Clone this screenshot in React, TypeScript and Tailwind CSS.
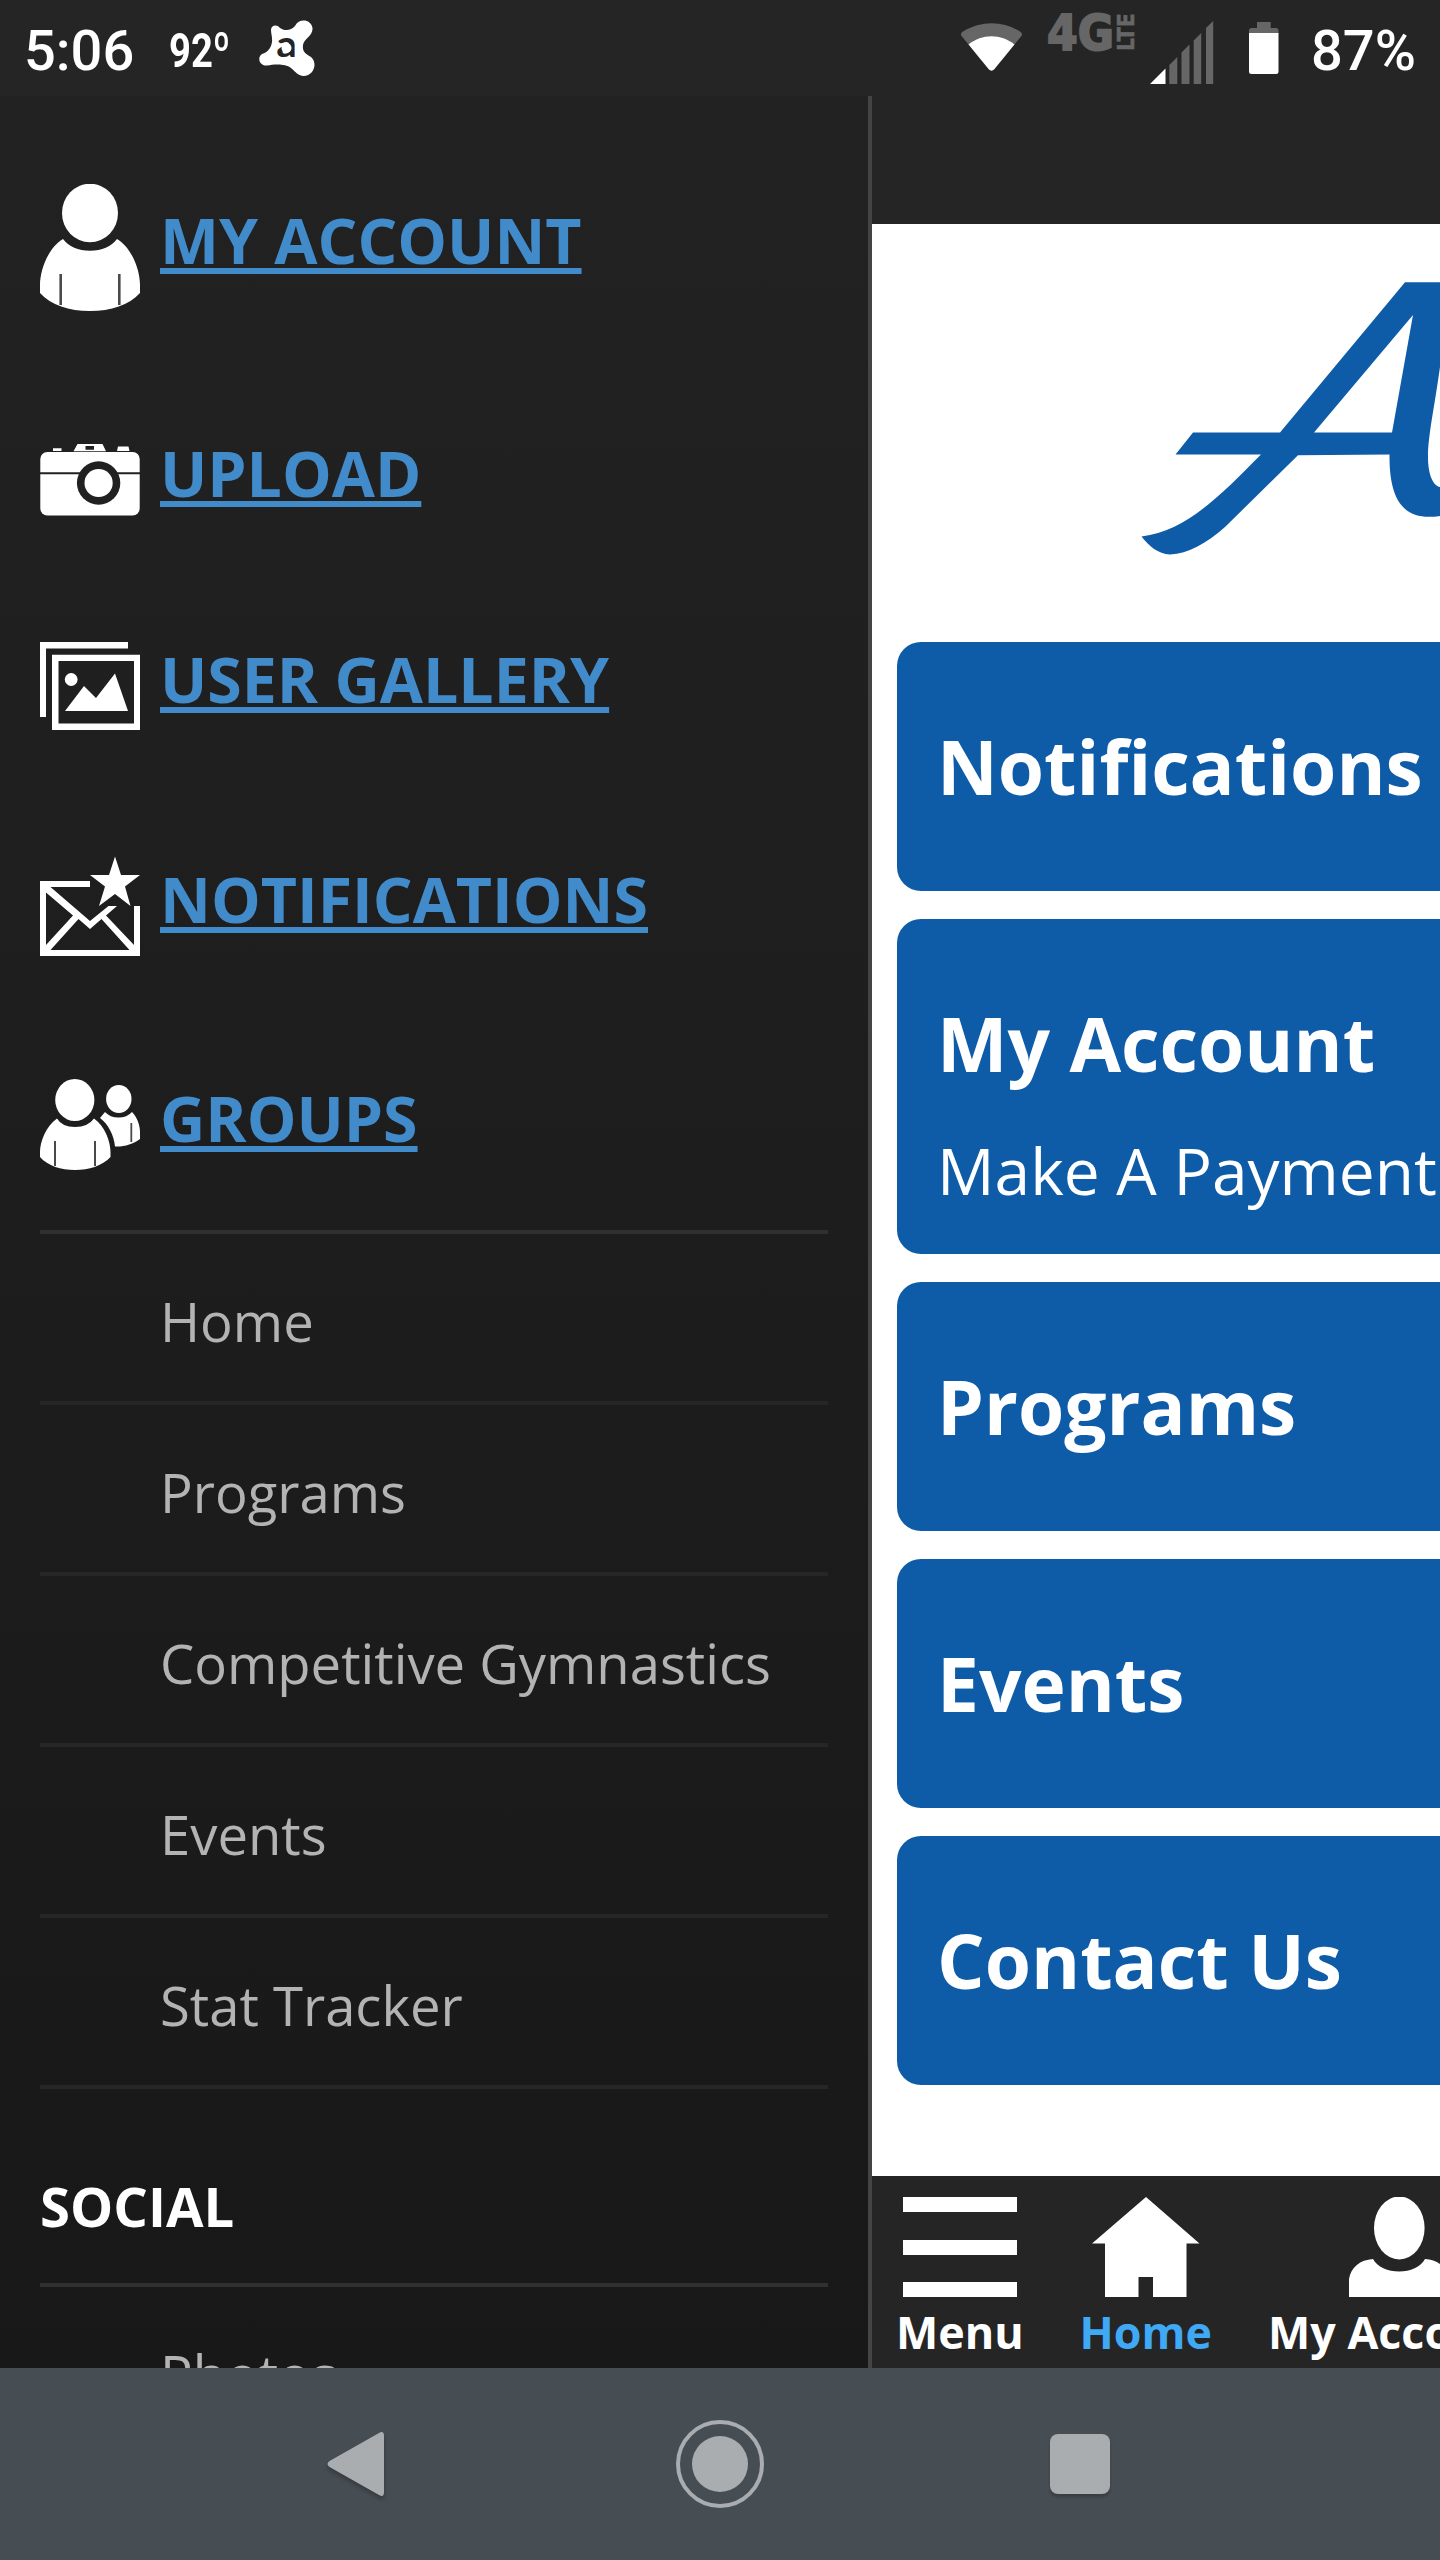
import type { ReactNode } from "react";

function PersonIcon() {
  return (
    <svg className="h-[128px] w-[100px] shrink-0 fill-white" viewBox="40 184 100 128">
      <ellipse cx="90" cy="213" rx="28" ry="29.3" />
      <path d="M63 239 Q72 250.7 90 250.7 Q108 250.7 117 239 C132 248 140 270 140 285 V293 C129 305 111 311 90 311 C69 311 51 305 40 293 V285 C40 270 48 248 63 239 Z" />
      <path d="M60.7 274 V305 M119.3 274 V305" className="fill-none stroke-[#4a4a4a]" strokeWidth="2.6" />
    </svg>
  );
}

function CameraIcon() {
  return (
    <svg className="h-[80px] w-[100px] shrink-0 fill-white" viewBox="40 436 100 80">
      <path d="M53 451 V448.3 H61.5 V451 Z M117 451 L118 446.5 H128.5 L129.5 451 Z" />
      <path fillRule="evenodd" d="M73.5 451.3 L77.5 444 H102.5 L106 451.3 Z M85.5 446 V449.7 H94 V446 Z" />
      <rect x="40.3" y="452" width="99.4" height="63.6" rx="7" />
      <path d="M40 473.2 H140" className="stroke-[#212121]" strokeWidth="2" />
      <circle cx="98.6" cy="483" r="21.7" className="fill-[#212121]" />
      <circle cx="98.6" cy="483" r="14.1" />
    </svg>
  );
}

function GalleryIcon() {
  return (
    <svg className="h-[92px] w-[100px] shrink-0 fill-white" viewBox="40 640 100 92">
      <path d="M40 642 H128 V648.6 H46 V717 H40 Z" />
      <path fillRule="evenodd" d="M52 654.8 H140 V730 H52 Z M58.5 661 V723.5 H134 V661 Z" />
      <circle cx="71.2" cy="679.5" r="6.4" />
      <path d="M65 711 L84 686 L96 698 L115 673.5 L128 711 Z" />
    </svg>
  );
}

function MailStarIcon() {
  return (
    <svg className="h-[102px] w-[100px] shrink-0 fill-white" viewBox="40 855 100 102">
      <path d="M40 881 H90 V887 H50.5 L90 921 L108.5 906 H117 L106 915.5 L134 945 V906 H140 V956 H40 Z M46 892.5 V945 L73 915.5 Z M78.5 919 L50.5 950 H129.5 L101.5 919 L90 929 Z" fillRule="evenodd" />
      <path d="M115 856.5 L121 875 H140 L125 886.5 L130.5 906 L115 894 L99 906 L105 886.5 L90 875 H109 Z" />
    </svg>
  );
}

function GroupIcon() {
  return (
    <svg className="h-[94px] w-[100px] shrink-0 fill-white" viewBox="40 1077 100 94">
      <ellipse cx="118.8" cy="1099" rx="12.7" ry="14" />
      <path d="M105 1112 Q110 1117.5 118.5 1117.5 Q127 1117.5 132 1112 C137 1117 140 1125 140 1132 V1139 C133 1144 124 1147 115 1146.5 C114 1135 108 1124 100 1118 Z" />
      <path d="M131.3 1123 V1142" className="stroke-[#4a4a4a]" strokeWidth="1.8" />
      <ellipse cx="74.8" cy="1100" rx="19.6" ry="21" />
      <path d="M57 1118.5 Q62 1127 75 1127 Q88 1127 94 1118.5 C105 1126 110.5 1142 110.5 1152 V1157 C102 1166 89 1170 75 1170 C61 1170 48 1166 40 1157 V1152 C40 1142 46 1126 57 1118.5 Z" />
      <path d="M55 1141 V1166 M95 1141 V1166" className="fill-none stroke-[#4a4a4a]" strokeWidth="2" />
    </svg>
  );
}

function StatusBar() {
  return (
    <header className="flex h-24 w-full shrink-0 bg-[#252525] font-[Roboto] text-white">
      <div className="w-[110px] shrink-0 pl-[24px] pt-[19px] text-[56px] leading-[64px] font-medium whitespace-nowrap">5:06</div>
      <div className="ml-[59px] w-[64px] shrink-0 pt-[20px] text-[49px] leading-[62px] font-bold whitespace-nowrap">
        <span className="inline-block origin-left scale-x-[0.78]">92º</span>
      </div>
      <svg className="ml-[25px] mt-[19px] h-[58px] w-[58px] shrink-0" viewBox="258 19 58 58">
        <path
          d="M271 30 C271 25 277 24 280 28 C284 31 291 31 295 26 C299 18 311 19 312.500 28 C313 36 304 38 303 45 C302 52 306 54 311 57 C318 63 314 76 303.500 76 C294 75 294 66 283 65 C276 64 272 65 267 65.500 C259 66 257 57 262 54 C268 52 271 48 272 42 C272.500 37 271 34 271 30 Z"
          className="fill-white"
        />
        <text x="276.500" y="57" textLength="20" lengthAdjust="spacingAndGlyphs" className="fill-[#252525] font-[Lato] text-[36px] font-black">a</text>
        <circle cx="286.500" cy="48" r="5" className="fill-white" />
      </svg>
      <svg className="ml-[644px] mt-[22px] h-[50px] w-[64px] shrink-0" viewBox="960 22 64 50">
        <path d="M961.500 36 Q960 33 963 31.500 C981 20.500 1003 20.500 1020 31.500 Q1023 33 1021.500 36 L1014 45 H969 Z" className="fill-[#666666]" />
        <path d="M968.500 44.500 C982 33.500 1001 33.500 1014.500 44.500 L994.500 69 Q991.500 72.500 988.500 69 Z" className="fill-white" />
      </svg>
      <svg className="ml-[23px] h-[66px] w-[88px] shrink-0 overflow-visible fill-[#666666] font-['DejaVu_Sans']" viewBox="1047 0 88 66">
        <text x="1047" y="50" textLength="67" lengthAdjust="spacingAndGlyphs" className="stroke-[#666666] stroke-[2px] text-[50px] font-bold">4G</text>
        <text transform="translate(1133.5 51) rotate(-90)" textLength="38" lengthAdjust="spacingAndGlyphs" className="stroke-[#666666] stroke-[0.5px] text-[23px] font-bold">LTE</text>
      </svg>
      <svg className="ml-[14px] mt-[20px] h-[64px] w-[65px] shrink-0" viewBox="1149 20 65 64">
        <path d="M1150 84 L1165.500 68.500 V84 Z" className="fill-white" />
        <path d="M1169.300 84 V65 L1177.300 57 V84 Z M1181.500 84 V52.500 L1189.500 44.500 V84 Z M1193.700 84 V40.500 L1201.200 33 V84 Z M1206 84 V28 L1213.200 21 V84 Z" className="fill-[#666666]" />
      </svg>
      <svg className="ml-[34px] mt-[21px] h-[54px] w-[32px] shrink-0" viewBox="1248 21 32 54">
        <path d="M1249 34 V30.500 Q1249 28 1251.500 28 H1257 V22 H1270.700 V28 H1276 Q1278.500 28 1278.500 30.500 V34 Z" className="fill-[#666666]" />
        <path d="M1249 33 H1278.500 V71.500 Q1278.500 74 1276 74 H1251.500 Q1249 74 1249 71.500 Z" className="fill-white" />
      </svg>
      <div className="ml-[31px] pt-[19px] text-[56px] leading-[64px] font-medium whitespace-nowrap">87%</div>
    </header>
  );
}

type AccountLinkProps = { icon: ReactNode; label: string; row: string; offset: string };

function AccountLink({ icon, label, row, offset }: AccountLinkProps) {
  return (
    <a className={`flex items-start gap-5 ${row}`}>
      {icon}
      <span className={`text-[62.6px] leading-[64px] font-bold whitespace-nowrap text-[#428bca] underline decoration-[6px] underline-offset-[4px] [text-decoration-skip-ink:none] ${offset}`}>
        {label}
      </span>
    </a>
  );
}

const pages = ["Home", "Programs", "Competitive Gymnastics", "Events", "Stat Tracker"];

function PageLink({ label, strong }: { label: string; strong?: boolean }) {
  return (
    <a className={`block h-[171px] shrink-0 border-t-4 pt-[47px] pl-[120px] text-[54.4px] leading-[80px] whitespace-nowrap text-[#b3b3b3] ${strong ? "border-[#303030]" : "border-[#262626]"}`}>
      {label}
    </a>
  );
}

function Sidebar() {
  return (
    <aside className="w-[872px] shrink-0 overflow-hidden border-r-4 border-[#444444] bg-linear-to-b from-[#222222] to-[#181818] px-10 pt-[88px]">
      <AccountLink icon={<PersonIcon />} label="MY ACCOUNT" row="h-[252px]" offset="mt-[24px]" />
      <AccountLink icon={<CameraIcon />} label="UPLOAD" row="h-[204px]" offset="mt-[5px]" />
      <AccountLink icon={<GalleryIcon />} label="USER GALLERY" row="h-[215px]" offset="mt-[7px]" />
      <AccountLink icon={<MailStarIcon />} label="NOTIFICATIONS" row="h-[222px]" offset="mt-[12px]" />
      <AccountLink icon={<GroupIcon />} label="GROUPS" row="h-[153px]" offset="mt-[9px]" />
      {pages.map((page, i) => (
        <PageLink key={page} label={page} strong={i === 0} />
      ))}
      <h2 className="h-[198px] border-t-4 border-[#262626] pt-[77px] text-[54.4px] leading-[80px] font-bold text-white">SOCIAL</h2>
      <PageLink label="Photos" strong />
    </aside>
  );
}

function Card({ title, subtitle }: { title: string; subtitle?: string }) {
  return (
    <section className={`rounded-l-[24px] bg-[#0e5ca8] pt-[74px] pl-10 whitespace-nowrap text-white ${subtitle ? "h-[335px]" : "h-[249px]"}`}>
      <h3 className="text-[74.8px] leading-[100px] font-bold">{title}</h3>
      {subtitle && <p className="mt-[38px] text-[64px] leading-[80px]">{subtitle}</p>}
    </section>
  );
}

function TabItem({ icon, label, tone }: { icon: ReactNode; label: string; tone: string }) {
  return (
    <a className="flex shrink-0 flex-col items-center">
      {icon}
      <span className={`mt-[5px] text-[44.8px] leading-[60px] font-bold whitespace-nowrap ${tone}`}>{label}</span>
    </a>
  );
}

function MainPane() {
  return (
    <main className="flex w-[568px] shrink-0 flex-col overflow-hidden bg-white">
      <div className="h-32 shrink-0 bg-[#252525]" />
      <svg className="ml-[228px] h-[360px] w-[340px] shrink-0 fill-[#0e5ca8]" viewBox="0 -16 340 360">
        <path
          fillRule="evenodd"
          d="M305 42.300 H340 V127 C334 170 328 196 328 217 C328 234 333 246 340 247 V276 C307 281 289 265 289.500 214.500 L198 215.300 L125 287 C107 303 88 314 70 314.500 C58 314 49 306 41.500 296.500 C86 291 120 256 161 214.500 H75.500 L93 192.500 H180 Z M313 75 L214 192.500 H292 Z"
        />
      </svg>
      <div className="mt-[58px] ml-[25px] flex flex-col gap-7">
        <Card title="Notifications" />
        <Card title="My Account" subtitle="Make A Payment" />
        <Card title="Programs" />
        <Card title="Events" />
        <Card title="Contact Us" />
      </div>
      <nav className="mt-auto flex h-48 shrink-0 gap-[56px] bg-[#252525] pt-[21px] pl-6">
        <TabItem
          label="Menu"
          tone="text-white"
          icon={
            <span className="flex h-[100px] w-[114px] flex-col justify-between">
              <i className="h-[15px] bg-white" />
              <i className="h-[15px] bg-white" />
              <i className="h-[15px] bg-white" />
            </span>
          }
        />
        <TabItem
          label="Home"
          tone="text-[#3fa9f5]"
          icon={
            <svg className="h-[100px] w-[108px] fill-white" viewBox="1093 2197 108 100">
              <path d="M1147 2197 L1200.500 2243.500 H1187.500 V2297 H1154 V2277 H1139.500 V2297 H1106 V2243.500 H1093 Z" />
            </svg>
          }
        />
        <TabItem
          label="My Account"
          tone="text-white"
          icon={
            <svg className="h-[100px] w-[100px] fill-white" viewBox="1350 2197 100 100">
              <ellipse cx="1400.300" cy="2228" rx="25.300" ry="31.500" />
              <path d="M1350 2297 V2279 C1352 2267 1361 2260 1374 2259 C1378 2267 1389 2271.500 1400.300 2271.500 C1411 2271.500 1422 2267 1426 2259 C1439 2260 1448 2267 1450 2279 V2297 Z" />
            </svg>
          }
        />
      </nav>
    </main>
  );
}

function NavigationBar() {
  return (
    <footer className="flex h-48 shrink-0 items-center bg-[#464d53]">
      <svg className="ml-[326px] h-[72px] w-[60px] fill-[#a9adb0] drop-shadow-[0_3px_2px_rgba(0,0,0,0.25)]" viewBox="326 2428 60 72">
        <path d="M379 2433 Q384 2430 384 2436 V2492 Q384 2498 379 2495 L329.500 2467 Q325.500 2464 329.500 2461 Z" />
      </svg>
      <div className="ml-[290px] flex size-[88px] items-center justify-center rounded-full border-4 border-[#a9adb0]">
        <div className="size-14 rounded-full bg-[#a9adb0]" />
      </div>
      <div className="ml-[286px] size-[60px] rounded-[8px] bg-[#a9adb0] shadow-[0_3px_3px_rgba(0,0,0,0.2)]" />
    </footer>
  );
}

export default function App() {
  return (
    <div className="flex h-[2560px] w-[1440px] flex-col overflow-hidden bg-[#252525] font-['Open_Sans',sans-serif]">
      <StatusBar />
      <div className="flex h-[2272px] shrink-0">
        <Sidebar />
        <MainPane />
      </div>
      <NavigationBar />
    </div>
  );
}
